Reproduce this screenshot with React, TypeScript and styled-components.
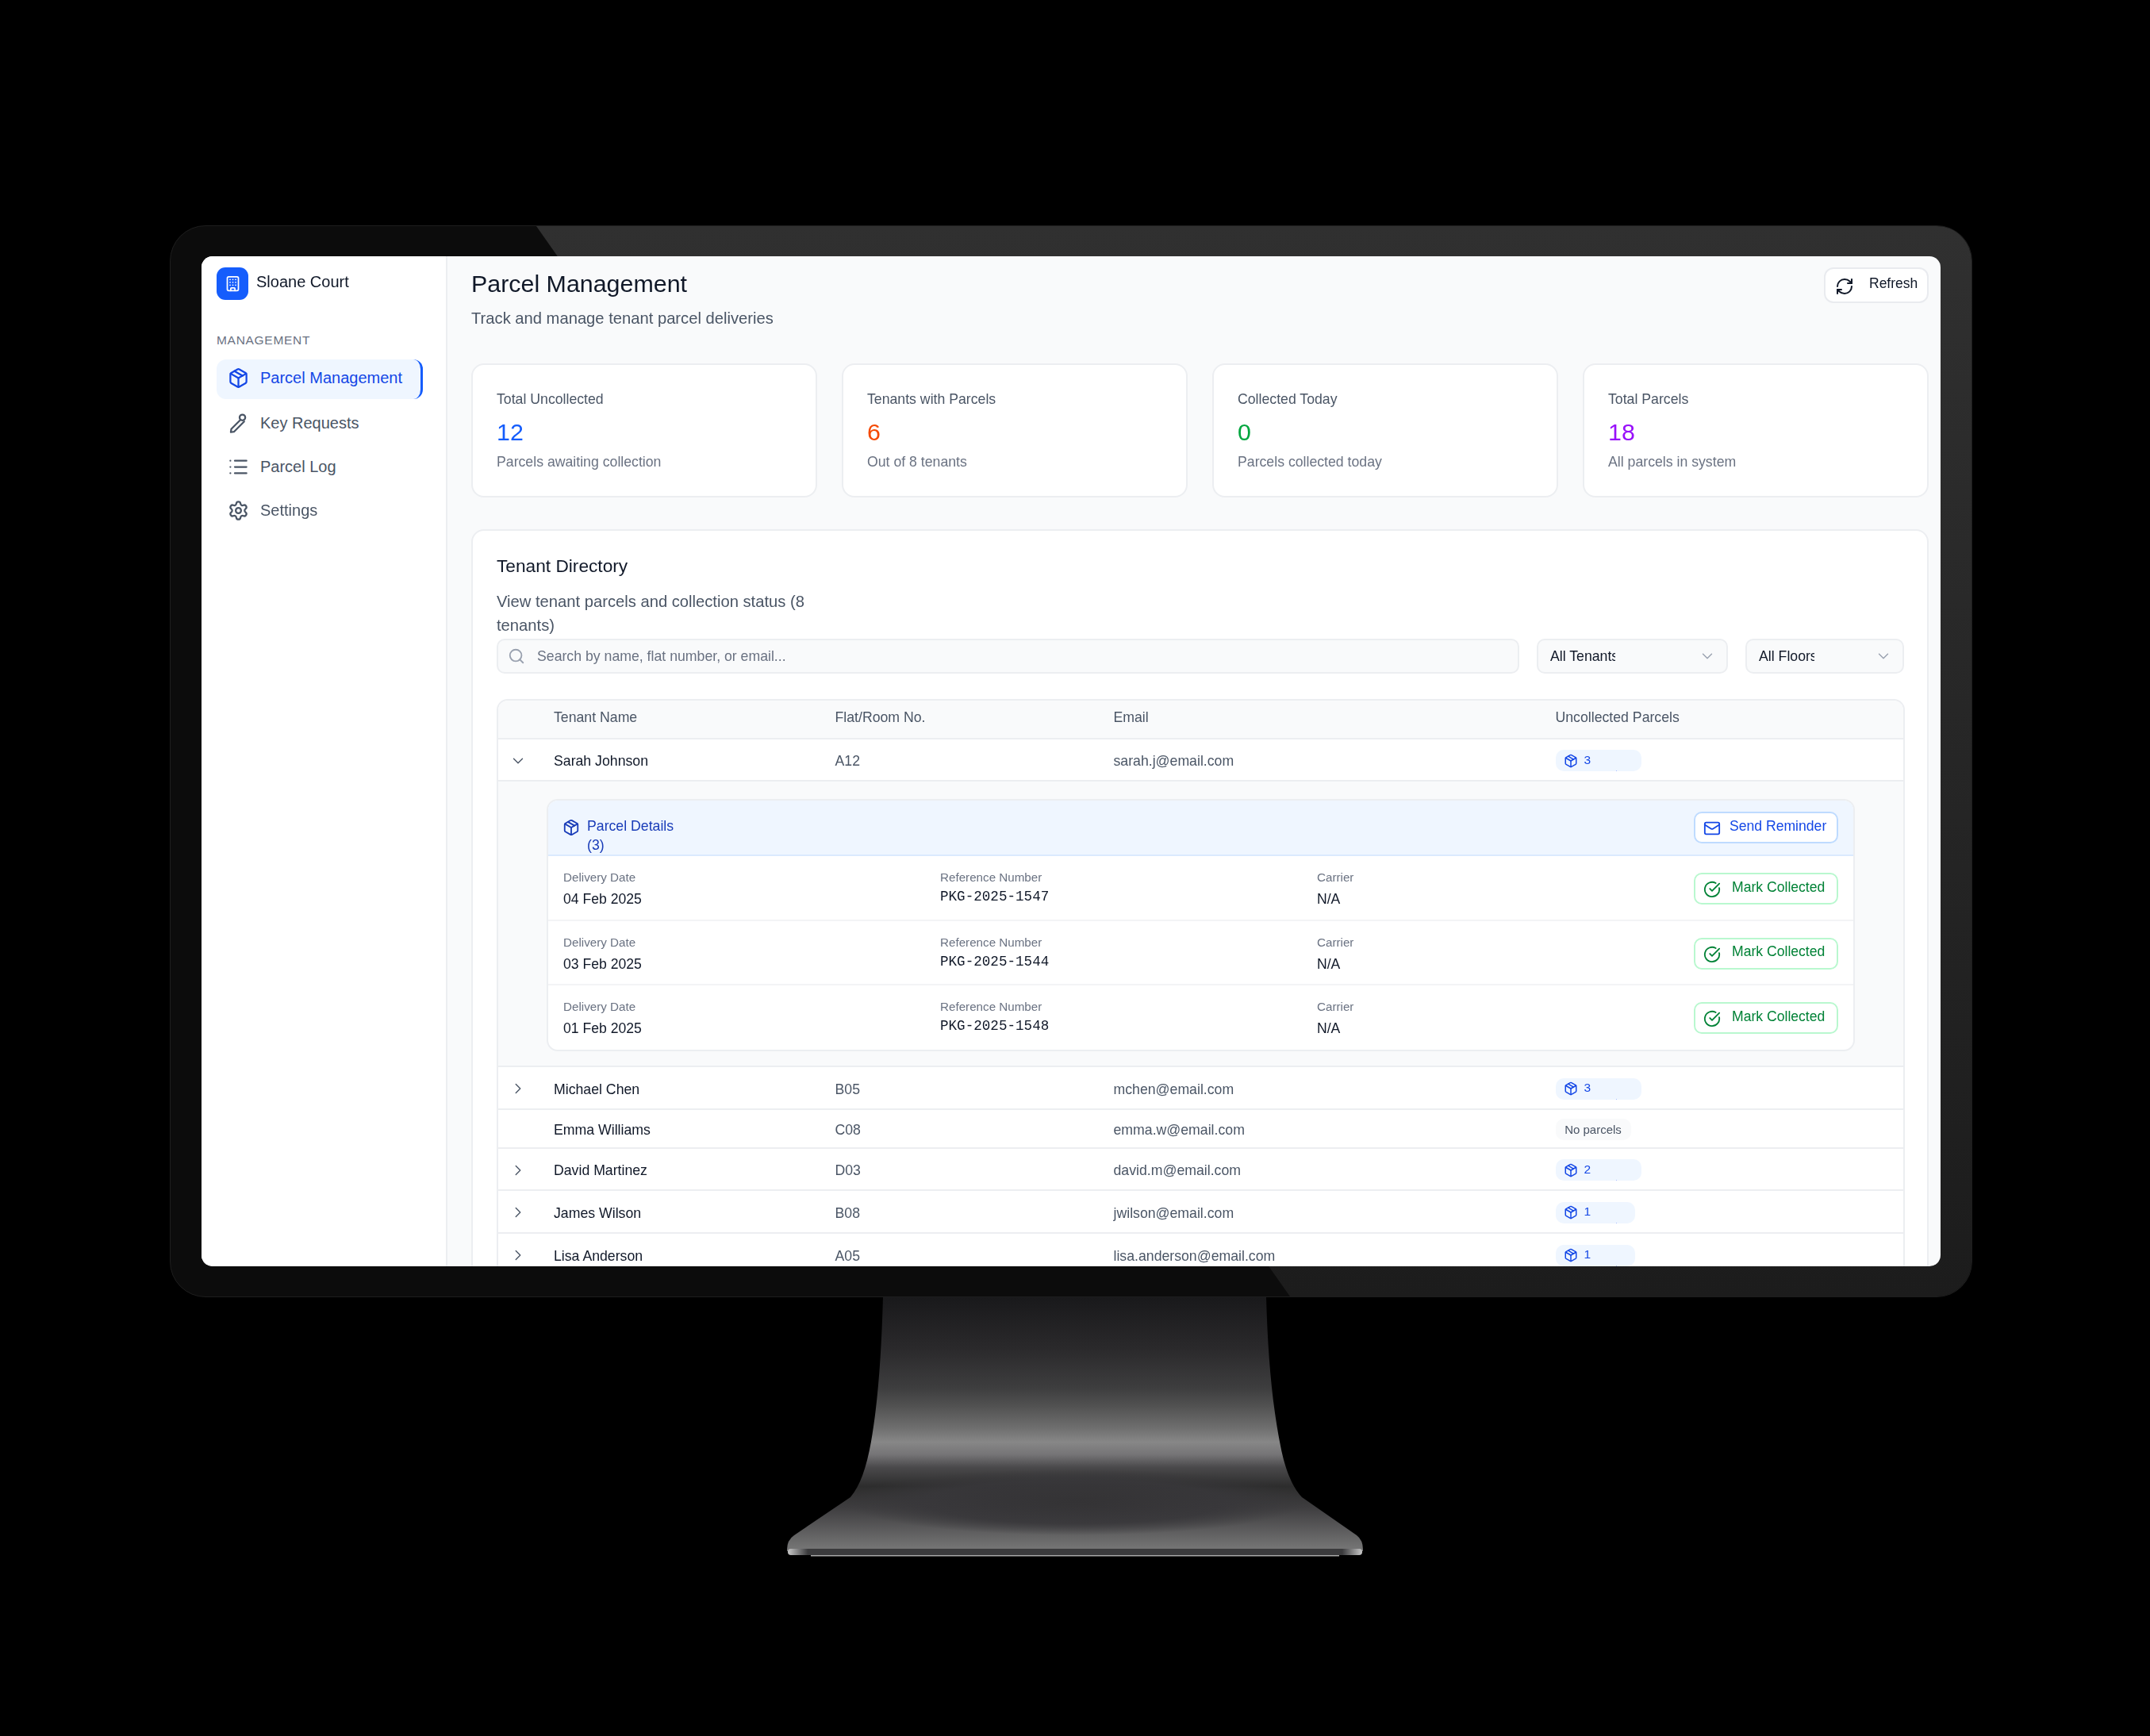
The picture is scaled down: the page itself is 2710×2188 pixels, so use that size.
import React from 'react';
import styled, { createGlobalStyle } from 'styled-components';
import {
  Building,
  ChevronDown,
  ChevronRight,
  CircleCheckBig,
  List,
  Mail,
  Package,
  RefreshCw,
  Search,
  Settings,
} from 'lucide-react';

const GlobalStyle = createGlobalStyle`
  html, body {
    margin: 0;
    background: #000000;
  }

  body {
    font-family: "Liberation Sans", Arial, sans-serif;
  }
`;

const Page = styled.div`
  display: flex;
  flex-direction: column;
  align-items: center;
  width: 2710px;
  height: 2188px;
  padding: 284px 10px 0 0;
  box-sizing: border-box;
  overflow: hidden;
`;

const Bezel = styled.div`
  position: relative;
  width: 2272px;
  height: 1351px;
  padding: 38px 39px;
  box-sizing: border-box;
  flex-shrink: 0;
  border: 1px solid #1e1e1e;
  border-radius: 45px;
  background: #0c0c0c;
  overflow: hidden;

  &::before {
    content: '';
    position: absolute;
    inset: 0;
    background: linear-gradient(180deg, #303030, #1c1c1c);
    clip-path: polygon(461px 0, 100% 0, 100% 100%, 1411px 100%);
  }
`;

const Screen = styled.div`
  position: relative;
  display: flex;
  height: 100%;
  border-radius: 14px;
  overflow: hidden;
  background: #f9fafb;
  color: #101828;
  filter: blur(0.35px);
`;

const StandArt = styled.svg`
  display: block;
  flex-shrink: 0;
  margin-left: 10px;
`;

const Sidebar = styled.aside`
  flex: 0 0 310px;
  box-sizing: border-box;
  padding: 14px 18px 0 19px;
  background: #ffffff;
  border-right: 2px solid #eceef1;
`;

const Brand = styled.div`
  display: flex;
  align-items: center;
  gap: 10px;
  height: 41px;
`;

const BrandMark = styled.div`
  display: flex;
  align-items: center;
  justify-content: center;
  width: 40px;
  height: 41px;
  border-radius: 11px;
  background: #155dfc;
  color: #ffffff;
`;

const BrandName = styled.span`
  font-size: 20px;
  position: relative;
  top: -2px;
`;

const NavHeading = styled.div`
  margin: 42px 0 15px;
  font-size: 15.5px;
  line-height: 18px;
  letter-spacing: 0.7px;
  color: #6a7282;
`;

const NavList = styled.nav`
  display: flex;
  flex-direction: column;
  gap: 5px;
`;

const NavItem = styled.div<{ $active?: boolean }>`
  display: flex;
  align-items: center;
  gap: 14px;
  height: 50px;
  width: 260px;
  padding: ${({ $active }) => ($active ? '0 0 3px 14px' : '0 0 0 14px')};
  box-sizing: border-box;
  border-radius: 12px;
  font-size: 20px;
  color: ${({ $active }) => ($active ? '#1447e6' : '#4a5565')};
  background: ${({ $active }) => ($active ? '#eff6ff' : 'transparent')};
  border-right: ${({ $active }) => ($active ? '3px solid #155dfc' : '0')};

  svg {
    flex-shrink: 0;
  }
`;

const Main = styled.main`
  flex: 1;
  min-width: 0;
  padding: 14px 15px 0 30px;
`;

const PageHeader = styled.header`
  display: flex;
  justify-content: space-between;
  align-items: flex-start;
  height: 121px;
`;

const PageTitle = styled.h1`
  margin: 0;
  font-size: 30.4px;
  font-weight: 400;
  line-height: 40px;
`;

const PageSubtitle = styled.p`
  margin: 9px 0 0;
  font-size: 20.2px;
  line-height: 30px;
  color: #4a5565;
`;

const RefreshButton = styled.button`
  display: flex;
  align-items: center;
  gap: 19px;
  width: 132px;
  height: 45px;
  padding: 2px 0 0 12px;
  box-sizing: border-box;
  border: 2px solid #e9ebef;
  border-radius: 12px;
  background: #ffffff;
  font-family: inherit;
  font-size: 17.5px;
  color: #101828;

  svg {
    flex-shrink: 0;
  }

  span {
    position: relative;
    top: -3px;
  }
`;

const StatGrid = styled.section`
  display: grid;
  grid-template-columns: repeat(4, 1fr);
  gap: 31px;
  margin-bottom: 40px;
`;

const StatCard = styled.div`
  height: 169px;
  box-sizing: border-box;
  padding: 30.5px 30px 0;
  background: #ffffff;
  border: 2px solid #eceef1;
  border-radius: 16px;
`;

const StatLabel = styled.div`
  font-size: 17.7px;
  line-height: 24px;
  color: #4a5565;
`;

const StatValue = styled.div<{ $color: string }>`
  margin-top: 11px;
  font-size: 30.4px;
  line-height: 36px;
  color: ${({ $color }) => $color};
`;

const StatNote = styled.div`
  margin-top: 8.6px;
  font-size: 17.7px;
  line-height: 24px;
  color: #6a7282;
`;

const DirectoryCard = styled.section`
  padding: 29px 28px 0 30px;
  background: #ffffff;
  border: 2px solid #eceef1;
  border-radius: 16px;
`;

const DirectoryTitle = styled.h2`
  margin: 0;
  font-size: 22.7px;
  font-weight: 400;
  line-height: 30px;
`;

const DirectoryNote = styled.p`
  width: 420px;
  margin: 15px 0 2px;
  font-size: 20.2px;
  line-height: 30px;
  color: #4a5565;
`;

const FilterBar = styled.div`
  display: flex;
  gap: 22px;
  height: 44px;
  margin-bottom: 32px;
`;

const SearchField = styled.div`
  flex: 0 0 1289px;
  display: flex;
  align-items: center;
  gap: 15px;
  padding-left: 12px;
  box-sizing: border-box;
  background: #f9fafb;
  border: 2px solid #eceef1;
  border-radius: 10px;
  font-size: 17.7px;
  color: #6a7282;
`;

const SelectBox = styled.div<{ $width: number }>`
  flex: 0 0 ${({ $width }) => $width}px;
  display: flex;
  align-items: center;
  justify-content: space-between;
  padding: 0 13px 0 15px;
  box-sizing: border-box;
  background: #f9fafb;
  border: 2px solid #eceef1;
  border-radius: 10px;
  color: #99a1af;
`;

const SelectValue = styled.span<{ $width: number }>`
  width: ${({ $width }) => $width}px;
  overflow: hidden;
  white-space: nowrap;
  font-size: 17.7px;
  color: #101828;
`;

const TenantTable = styled.div`
  border: 2px solid #eceef1;
  border-bottom: 0;
  border-radius: 14px 14px 0 0;
`;

const Row = styled.div<{ $height: number; $head?: boolean }>`
  display: grid;
  grid-template-columns: 70px 354.5px 351px 557px 1fr;
  align-items: center;
  height: ${({ $height }) => $height}px;
  padding: ${({ $head }) => ($head ? '0 0 4px' : '4px 0 0')};
  box-sizing: border-box;
  border-bottom: 2px solid #eceef1;
  border-radius: ${({ $head }) => ($head ? '12px 12px 0 0' : '0')};
  background: ${({ $head }) => ($head ? '#f9fafb' : '#ffffff')};
  font-size: 17.7px;
  color: #4a5565;
`;

const Toggle = styled.div`
  display: flex;
  justify-content: center;
  width: 50px;
  margin-top: -2px;
  color: #4a5565;
`;

const TenantName = styled.div`
  color: #101828;
`;

const ParcelBadge = styled.span<{ $width: number }>`
  position: relative;
  display: flex;
  align-items: center;
  gap: 8px;
  width: ${({ $width }) => $width}px;
  height: 27px;
  margin-top: -2px;
  padding-left: 10px;
  box-sizing: border-box;
  border-radius: 10px;
  background: #eff6ff;
  font-size: 15.5px;
  color: #1447e6;

  span {
    position: relative;
    top: -1px;
  }

  &::after {
    content: '';
    position: absolute;
    left: 76px;
    bottom: 0;
    width: 1px;
    height: 1px;
    background: #a9bcff;
  }
`;

const EmptyBadge = styled.span`
  display: inline-flex;
  align-items: center;
  justify-content: center;
  width: 95px;
  height: 27px;
  margin-top: -2px;
  border-radius: 10px;
  background: #f9fafb;
  font-size: 15px;
  color: #4a5565;
`;

const ExpandedArea = styled.div`
  height: 360px;
  padding: 22px 0 0 61px;
  box-sizing: border-box;
  background: #f9fafb;
  border-bottom: 2px solid #eceef1;
`;

const DetailsPanel = styled.div`
  width: 1649px;
  height: 318px;
  box-sizing: border-box;
  border: 2px solid #eceef1;
  border-radius: 14px;
  background: #ffffff;
  overflow: hidden;
`;

const DetailsHeader = styled.div`
  display: flex;
  align-items: flex-start;
  justify-content: space-between;
  height: 70px;
  padding: 14px 19px 0 18px;
  box-sizing: border-box;
  background: #eff6ff;
  border-bottom: 2px solid #dbeafe;
`;

const DetailsHeading = styled.div`
  display: flex;
  gap: 9px;
  width: 150px;
  padding-top: 6px;
  font-size: 17.7px;
  line-height: 24px;
  color: #193cb8;

  svg {
    flex-shrink: 0;
    margin-top: 3px;
  }
`;

const ActionButton = styled.button<{ $tone: 'blue' | 'green' }>`
  display: flex;
  align-items: center;
  gap: ${({ $tone }) => ($tone === 'blue' ? 11 : 14)}px;
  width: 182px;
  height: 40px;
  padding: 2px 0 0 10px;
  box-sizing: border-box;
  background: #ffffff;
  border: 2px solid ${({ $tone }) => ($tone === 'blue' ? '#bedbff' : '#b9f8cf')};
  border-radius: 10px;
  font-family: inherit;
  font-size: 17.6px;
  white-space: nowrap;
  color: ${({ $tone }) => ($tone === 'blue' ? '#1447e6' : '#008236')};

  svg {
    flex-shrink: 0;
  }

  span {
    position: relative;
    top: -3px;
  }
`;

const DetailRow = styled.div`
  display: grid;
  grid-template-columns: 475px 475px 1fr 182px;
  align-items: start;
  height: 81.7px;
  padding: 17px 19px 0;
  box-sizing: border-box;
  border-bottom: 2px solid #f3f4f6;

  &:last-child {
    border-bottom: 0;
  }

  ${ActionButton} {
    margin-top: 4px;
  }
`;

const FieldLabel = styled.div`
  font-size: 15.2px;
  line-height: 20px;
  color: #6a7282;
`;

const FieldValue = styled.div<{ $mono?: boolean }>`
  margin-top: ${({ $mono }) => ($mono ? 3 : 6)}px;
  font-family: ${({ $mono }) => ($mono ? '"Liberation Mono", "Courier New", monospace' : 'inherit')};
  font-size: 17.6px;
  line-height: 22px;
  color: #101828;
`;

type Tenant = {
  name: string;
  flat: string;
  email: string;
  parcels: number;
  height: number;
};

const TENANTS: Tenant[] = [
  { name: 'Michael Chen', flat: 'B05', email: 'mchen@email.com', parcels: 3, height: 54 },
  { name: 'Emma Williams', flat: 'C08', email: 'emma.w@email.com', parcels: 0, height: 49 },
  { name: 'David Martinez', flat: 'D03', email: 'david.m@email.com', parcels: 2, height: 53 },
  { name: 'James Wilson', flat: 'B08', email: 'jwilson@email.com', parcels: 1, height: 54 },
  { name: 'Lisa Anderson', flat: 'A05', email: 'lisa.anderson@email.com', parcels: 1, height: 54 },
];

const DELIVERIES = [
  { date: '04 Feb 2025', reference: 'PKG-2025-1547' },
  { date: '03 Feb 2025', reference: 'PKG-2025-1544' },
  { date: '01 Feb 2025', reference: 'PKG-2025-1548' },
];

const STATS = [
  { label: 'Total Uncollected', value: '12', note: 'Parcels awaiting collection', color: '#155dfc' },
  { label: 'Tenants with Parcels', value: '6', note: 'Out of 8 tenants', color: '#f54900' },
  { label: 'Collected Today', value: '0', note: 'Parcels collected today', color: '#00a63e' },
  { label: 'Total Parcels', value: '18', note: 'All parcels in system', color: '#9810fa' },
];

function Badge({ count }: { count: number }): React.ReactElement {
  if (count === 0) return <EmptyBadge>No parcels</EmptyBadge>;

  return (
    <ParcelBadge $width={count === 1 ? 100 : 108}>
      <Package size={18} />
      <span>{count}</span>
    </ParcelBadge>
  );
}

// the key in the reference is a slim pen-like shape, not the lucide one
function KeyIcon(): React.ReactElement {
  return (
    <svg
      width="27"
      height="27"
      viewBox="0 0 24 24"
      fill="none"
      stroke="currentColor"
      strokeWidth="2"
      strokeLinecap="round"
      strokeLinejoin="round"
    >
      <circle cx="16.5" cy="5.5" r="3.2" />
      <path d="M14 8.5 4 18.5 3.5 22 7 21.5 18.5 10" />
    </svg>
  );
}

function Stand(): React.ReactElement {
  return (
    <StandArt width="726" height="328" viewBox="0 0 726 328">
      <defs>
        <linearGradient id="neck" x1="0" y1="0" x2="0" y2="1">
          <stop offset="0" stopColor="#19191b" />
          <stop offset="0.2" stopColor="#2a292b" />
          <stop offset="0.36" stopColor="#3e3e3f" />
          <stop offset="0.43" stopColor="#525252" />
          <stop offset="0.516" stopColor="#6f6f6f" />
          <stop offset="0.57" stopColor="#878787" />
          <stop offset="0.62" stopColor="#757476" />
          <stop offset="0.67" stopColor="#4a494b" />
          <stop offset="0.745" stopColor="#2d2d2d" />
          <stop offset="0.83" stopColor="#3f3e40" />
          <stop offset="0.985" stopColor="#737373" />
        </linearGradient>
        <radialGradient id="scoop" cx="0.5" cy="0.5" r="0.5">
          <stop offset="0" stopColor="#343335" />
          <stop offset="0.65" stopColor="#38373a" stopOpacity="0.9" />
          <stop offset="1" stopColor="#38373a" stopOpacity="0" />
        </radialGradient>
        <linearGradient id="foot" x1="0" y1="0" x2="1" y2="0">
          <stop offset="0" stopColor="#c8c8c8" />
          <stop offset="0.035" stopColor="#3a3a3c" />
          <stop offset="0.965" stopColor="#3a3a3c" />
          <stop offset="1" stopColor="#c8c8c8" />
        </linearGradient>
      </defs>
      <path
        d="M121 0 L604 0 C606 70 611 130 621 182 C627 215 636 238 649 252 L718 300 Q726 306 726 318 L726 320 L0 320 L0 318 Q0 306 9 300 L80 252 C92 238 100 215 106 182 C115 130 119 70 121 0 Z"
        fill="url(#neck)"
      />
      <ellipse cx="363" cy="258" rx="290" ry="42" fill="url(#scoop)" />
      <rect x="1" y="317" width="724" height="8" rx="4" fill="url(#foot)" />
      <rect x="30" y="325" width="666" height="1.5" fill="#a8a8a8" />
    </StandArt>
  );
}

export default function App(): React.ReactElement {
  return (
    <>
      <GlobalStyle />
      <Page>
        <Bezel>
          <Screen>
            <Sidebar>
              <Brand>
                <BrandMark>
                  <Building size={21} />
                </BrandMark>
                <BrandName>Sloane Court</BrandName>
              </Brand>
              <NavHeading>MANAGEMENT</NavHeading>
              <NavList>
                <NavItem $active>
                  <Package size={27} />
                  Parcel Management
                </NavItem>
                <NavItem>
                  <KeyIcon />
                  Key Requests
                </NavItem>
                <NavItem>
                  <List size={27} />
                  Parcel Log
                </NavItem>
                <NavItem>
                  <Settings size={27} />
                  Settings
                </NavItem>
              </NavList>
            </Sidebar>
            <Main>
              <PageHeader>
                <div>
                  <PageTitle>Parcel Management</PageTitle>
                  <PageSubtitle>Track and manage tenant parcel deliveries</PageSubtitle>
                </div>
                <RefreshButton>
                  <RefreshCw size={24} />
                  <span>Refresh</span>
                </RefreshButton>
              </PageHeader>
              <StatGrid>
                {STATS.map((stat) => (
                  <StatCard key={stat.label}>
                    <StatLabel>{stat.label}</StatLabel>
                    <StatValue $color={stat.color}>{stat.value}</StatValue>
                    <StatNote>{stat.note}</StatNote>
                  </StatCard>
                ))}
              </StatGrid>
              <DirectoryCard>
                <DirectoryTitle>Tenant Directory</DirectoryTitle>
                <DirectoryNote>View tenant parcels and collection status (8 tenants)</DirectoryNote>
                <FilterBar>
                  <SearchField>
                    <Search size={22} color="#99a1af" />
                    Search by name, flat number, or email...
                  </SearchField>
                  <SelectBox $width={241}>
                    <SelectValue $width={82}>All Tenants</SelectValue>
                    <ChevronDown size={22} strokeWidth={1.5} />
                  </SelectBox>
                  <SelectBox $width={200}>
                    <SelectValue $width={70}>All Floors</SelectValue>
                    <ChevronDown size={22} strokeWidth={1.5} />
                  </SelectBox>
                </FilterBar>
                <TenantTable>
                  <Row $head $height={49}>
                    <div />
                    <div>Tenant Name</div>
                    <div>Flat/Room No.</div>
                    <div>Email</div>
                    <div>Uncollected Parcels</div>
                  </Row>
                  <Row $height={53}>
                    <Toggle>
                      <ChevronDown size={22} strokeWidth={1.5} />
                    </Toggle>
                    <TenantName>Sarah Johnson</TenantName>
                    <div>A12</div>
                    <div>sarah.j@email.com</div>
                    <div>
                      <Badge count={3} />
                    </div>
                  </Row>
                  <ExpandedArea>
                    <DetailsPanel>
                      <DetailsHeader>
                        <DetailsHeading>
                          <Package size={22} />
                          <span>Parcel Details (3)</span>
                        </DetailsHeading>
                        <ActionButton $tone="blue">
                          <Mail size={22} />
                          <span>Send Reminder</span>
                        </ActionButton>
                      </DetailsHeader>
                      {DELIVERIES.map((delivery) => (
                        <DetailRow key={delivery.reference}>
                          <div>
                            <FieldLabel>Delivery Date</FieldLabel>
                            <FieldValue>{delivery.date}</FieldValue>
                          </div>
                          <div>
                            <FieldLabel>Reference Number</FieldLabel>
                            <FieldValue $mono>{delivery.reference}</FieldValue>
                          </div>
                          <div>
                            <FieldLabel>Carrier</FieldLabel>
                            <FieldValue>N/A</FieldValue>
                          </div>
                          <ActionButton $tone="green">
                            <CircleCheckBig size={22} />
                            <span>Mark Collected</span>
                          </ActionButton>
                        </DetailRow>
                      ))}
                    </DetailsPanel>
                  </ExpandedArea>
                  {TENANTS.map((tenant) => (
                    <Row key={tenant.name} $height={tenant.height}>
                      <Toggle>{tenant.parcels > 0 && <ChevronRight size={22} strokeWidth={1.5} />}</Toggle>
                      <TenantName>{tenant.name}</TenantName>
                      <div>{tenant.flat}</div>
                      <div>{tenant.email}</div>
                      <div>
                        <Badge count={tenant.parcels} />
                      </div>
                    </Row>
                  ))}
                </TenantTable>
              </DirectoryCard>
            </Main>
          </Screen>
        </Bezel>
        <Stand />
      </Page>
    </>
  );
}
